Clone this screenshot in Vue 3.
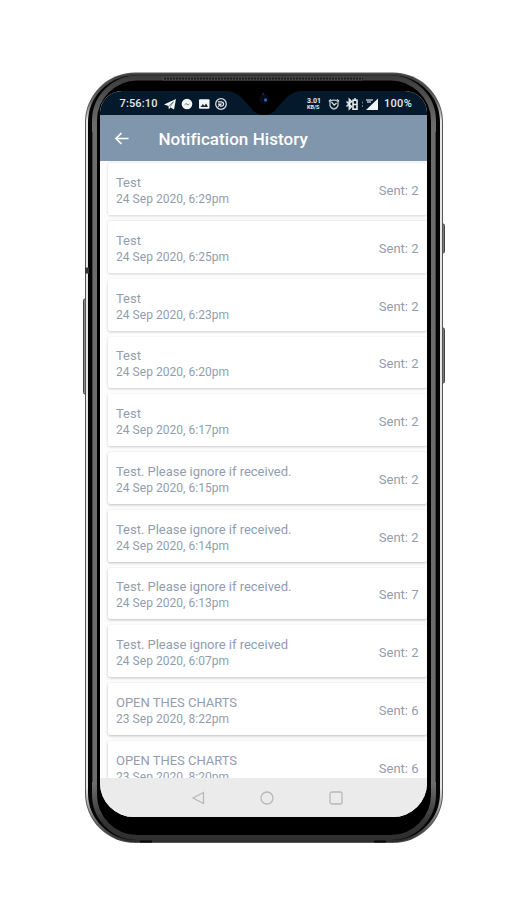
<template>
  <main class="stage">
    <div class="phone">
      <svg class="frame" viewBox="0 0 364 773" aria-hidden="true">
        <defs>
          <linearGradient id="rim" x1="0" y1="0" x2="0" y2="1">
            <stop offset="0" stop-color="#3c3c3c" />
            <stop offset="0.035" stop-color="#666" />
            <stop offset="0.06" stop-color="#e6e6e6" />
            <stop offset="0.93" stop-color="#e6e6e6" />
            <stop offset="0.97" stop-color="#777" />
            <stop offset="1" stop-color="#2c2c2c" />
          </linearGradient>
          <linearGradient id="band" x1="0" y1="0" x2="0" y2="1">
            <stop offset="0" stop-color="#3d3d3d" />
            <stop offset="0.06" stop-color="#6c6c6c" />
            <stop offset="0.93" stop-color="#6c6c6c" />
            <stop offset="0.98" stop-color="#333" />
            <stop offset="1" stop-color="#303030" />
          </linearGradient>
        </defs>
        <rect x="1.5" y="227" width="4" height="95" rx="1.5" fill="#888" stroke="#444" />
        <rect x="358.5" y="152" width="4" height="29" rx="1.5" fill="#777" stroke="#444" />
        <rect x="358.5" y="256" width="4" height="55" rx="1.5" fill="#777" stroke="#444" />
        <rect x="3" y="0.5" width="358" height="770.5" rx="50" fill="#555" />
        <rect x="5" y="2.5" width="354" height="766.5" rx="48" fill="#050505" stroke="url(#rim)" stroke-width="2" />
        <rect x="12.5" y="6" width="339" height="759.5" rx="43" fill="#000" stroke="url(#band)" stroke-width="5" />
        <path d="M10.5 60V710M353.5 60V710" stroke="#444" />
        <path d="M80 6.5H281" stroke="#484848" stroke-width="4" />
        <path d="M82 6.5H281" stroke="#1c1c1c" stroke-width="2" stroke-dasharray="2 1" />
        <path d="M3 198.5h4" stroke="#333" stroke-width="6" />
        <path d="M58 769.5h12M292 769.5h12" stroke="#080808" stroke-width="2" />
      </svg>

      <div class="screen">
        <header class="status">
          <span class="clock">7:56:10</span>
          <svg class="left-icons" viewBox="0 0 64 14">
            <path d="M0 7.4 12 2 10 12.5 6.5 10.5 4.8 12.2 4.5 9Z" fill="#f3f5f7" />
            <path d="m4.8 9 4.6-4.2-3.2 5" stroke="#4a5866" stroke-width=".7" fill="none" />
            <circle cx="23" cy="7" r="5.3" fill="#f3f5f7" />
            <path d="m19.8 8.6 2.2-2.6 2 1.5 2.3-1.6-2.3 2.7-2-1.5Z" fill="#66727e" />
            <rect x="35" y="2.3" width="10.5" height="9.5" rx="1" fill="#f3f5f7" />
            <path d="m36.5 10 2.3-3 1.5 1.8 1.8-2.3 2 3.5Z" fill="#1a2c3e" />
            <circle cx="57" cy="7" r="5.3" fill="none" stroke="#d8dde2" stroke-width="1.3" />
            <path d="M54 4.8h3.6q2 .2 2 2.2t-2 2.2h-1.6M54 9.6l3-2.5h-3" fill="none" stroke="#e8ebee" stroke-width="1.2" />
          </svg>
          <span class="grow"></span>
          <span class="speed"><b>3.01</b><b>KB/S</b></span>
          <svg class="right-icons" viewBox="0 0 50 14">
            <path d="m1 4.5 2-2M11 4.5 9 2.5" stroke="#dfe4e8" stroke-width="1.5" />
            <path d="M2 4.2q4-2.2 8 0v4.3Q9 11.7 6 12 3 11.7 2 8.5Z" fill="none" stroke="#b9c2ca" stroke-width="1.3" />
            <path d="m3.5 5 2.7 3.2 2.3-2.2" fill="none" stroke="#dfe4e8" stroke-width="1.2" />
            <path d="m18.5 4.5 5 5-2.2 2.3V2.3l2.2 2.2-5 5" fill="none" stroke="#e8ebee" stroke-width="1.5" />
            <rect x="25" y="3.2" width="4" height="9" fill="none" stroke="#e8ebee" stroke-width="1.6" />
            <path d="M26 2h2M25 7.5h4" stroke="#e8ebee" stroke-width="1.5" />
            <path d="M34.5 4.5v2M34.5 8v2" stroke="#66737f" />
            <path d="M50 1.5v11.5H38Z" fill="#f3f5f7" />
            <path d="M38 3h7M39 5h4" stroke="#b7bec4" stroke-width="1.5" />
          </svg>
          <span class="battery">100%</span>
        </header>

        <div class="appbar">
          <svg class="back" viewBox="0 0 16 16">
            <path d="M14.5 7.5H2M7.5 2 2 7.5l5.5 5.5" fill="none" stroke="#fff" stroke-width="1.7" />
          </svg>
          <h1>Notification History</h1>
        </div>

        <ul class="list">
          <li v-for="(item, i) in items" :key="item.date" class="card" :class="{ raised: i > 1, high: i > 4 }">
            <div class="info">
              <span class="title">{{ item.title }}</span>
              <span class="date">{{ item.date }}</span>
            </div>
            <span class="sent">Sent: {{ item.sent }}</span>
          </li>
        </ul>

        <nav class="navbar">
          <svg viewBox="0 0 14 14"><path d="M12.5 1.5v11L2 7Z" /></svg>
          <svg viewBox="0 0 14 14"><circle cx="7" cy="7" r="6" /></svg>
          <svg viewBox="0 0 14 14"><rect x="1" y="1" width="12" height="12" rx="2" /></svg>
        </nav>

        <svg class="notch" viewBox="0 0 72 26" aria-hidden="true">
          <path d="M0 0H72Q64 1 58 7L49 17Q44 24 36 24 28 24 23 17L14 7Q8 1 0 0Z" fill="#000" />
          <circle cx="36" cy="8" r="5" fill="#070a14" />
          <circle cx="37.5" cy="9" r="1.7" fill="#2b5cae" />
          <circle cx="35" cy="3" r="1.2" fill="#1b2040" />
        </svg>
      </div>
    </div>
  </main>
</template>

<script setup>
const items = [
  { title: 'Test', date: '24 Sep 2020, 6:29pm', sent: 2 },
  { title: 'Test', date: '24 Sep 2020, 6:25pm', sent: 2 },
  { title: 'Test', date: '24 Sep 2020, 6:23pm', sent: 2 },
  { title: 'Test', date: '24 Sep 2020, 6:20pm', sent: 2 },
  { title: 'Test', date: '24 Sep 2020, 6:17pm', sent: 2 },
  { title: 'Test. Please ignore if received.', date: '24 Sep 2020, 6:15pm', sent: 2 },
  { title: 'Test. Please ignore if received.', date: '24 Sep 2020, 6:14pm', sent: 2 },
  { title: 'Test. Please ignore if received.', date: '24 Sep 2020, 6:13pm', sent: 7 },
  { title: 'Test. Please ignore if received', date: '24 Sep 2020, 6:07pm', sent: 2 },
  { title: 'OPEN THES CHARTS', date: '23 Sep 2020, 8:22pm', sent: 6 },
  { title: 'OPEN THES CHARTS', date: '23 Sep 2020, 8:20pm', sent: 6 },
]
</script>

<style>
body {
  background: #fff;
}
</style>

<style scoped>
.stage {
  box-sizing: border-box;
  height: 900px;
  padding: 72px 0 0 82px;
  overflow: hidden;
  font-family: Roboto, sans-serif;
}

.phone {
  position: relative;
  box-sizing: border-box;
  width: 364px;
  height: 773px;
  padding: 19px 19px 0 18px;
}

/* metal body and side buttons behind the screen */
.frame {
  position: absolute;
  inset: 0;
  width: 364px;
  height: 773px;
}

.screen {
  position: relative;
  display: flex;
  flex-direction: column;
  height: 726px;
  overflow: hidden;
  border-radius: 22px 22px 34px 34px;
  background: #fdfdfd;
}

.status {
  display: flex;
  flex: none;
  align-items: center;
  box-sizing: border-box;
  height: 24px;
  padding: 1px 15px 0 19.5px;
  background: #04192b;
  color: #e6eaee;
  font-size: 11px;
  font-weight: 500;
}

.clock {
  width: 44.5px;
  letter-spacing: 0.15px;
  white-space: nowrap;
}

.left-icons {
  width: 64px;
  height: 14px;
}

.grow {
  flex: 1;
}

.speed {
  display: flex;
  flex-direction: column;
  width: 14px;
  margin-right: 7px;
  font-size: 7px;
  line-height: 6px;
}

.speed b + b {
  font-size: 5.5px;
}

.right-icons {
  width: 50px;
  height: 14px;
  margin-right: 6px;
}

.battery {
  width: 28px;
  letter-spacing: 0.3px;
}

.appbar {
  display: flex;
  flex: none;
  align-items: center;
  box-sizing: border-box;
  height: 46px;
  padding: 2px 0 0 14px;
  background: #8096ad;
}

.back {
  width: 16px;
  height: 16px;
  margin-right: 28.5px;
}

h1 {
  margin: 0;
  color: #fff;
  font-size: 17px;
  font-weight: 500;
  letter-spacing: 0.06px;
  white-space: nowrap;
}

.list {
  display: flex;
  flex: 1;
  flex-direction: column;
  gap: 6px;
  min-height: 0;
  margin: 0;
  padding: 2.25px 0 0 8px;
  overflow: hidden;
  list-style: none;
}

.card {
  display: flex;
  flex: none;
  align-items: center;
  justify-content: space-between;
  box-sizing: border-box;
  height: 51.75px;
  padding: 3px 8.5px 0 8px;
  border-radius: 2px;
  background: #fff;
  box-shadow: 0 0.5px 3px rgba(0, 0, 0, 0.17);
  color: #929daf;
}

.card.raised {
  box-shadow: 0 1px 3px rgba(0, 0, 0, 0.2);
}

.card.high {
  box-shadow: 0 1px 3px rgba(0, 0, 0, 0.26);
}

.info {
  display: flex;
  flex-direction: column;
}

.title {
  font-size: 13px;
  line-height: 17px;
  letter-spacing: -0.02px;
  white-space: nowrap;
}

.date {
  font-size: 12px;
  line-height: 16px;
  letter-spacing: 0.04px;
  white-space: nowrap;
}

.sent {
  font-size: 13px;
}

.navbar {
  display: flex;
  flex: none;
  align-items: center;
  justify-content: center;
  gap: 55px;
  height: 39px;
  padding-left: 7px;
  background: #ebebeb;
}

.navbar svg {
  width: 14px;
  height: 14px;
  fill: none;
  stroke: #b8b8b8;
  stroke-width: 1.3;
}

/* camera cut-out over the status bar */
.notch {
  position: absolute;
  top: 0;
  left: 128px;
  width: 72px;
  height: 26px;
}
</style>
